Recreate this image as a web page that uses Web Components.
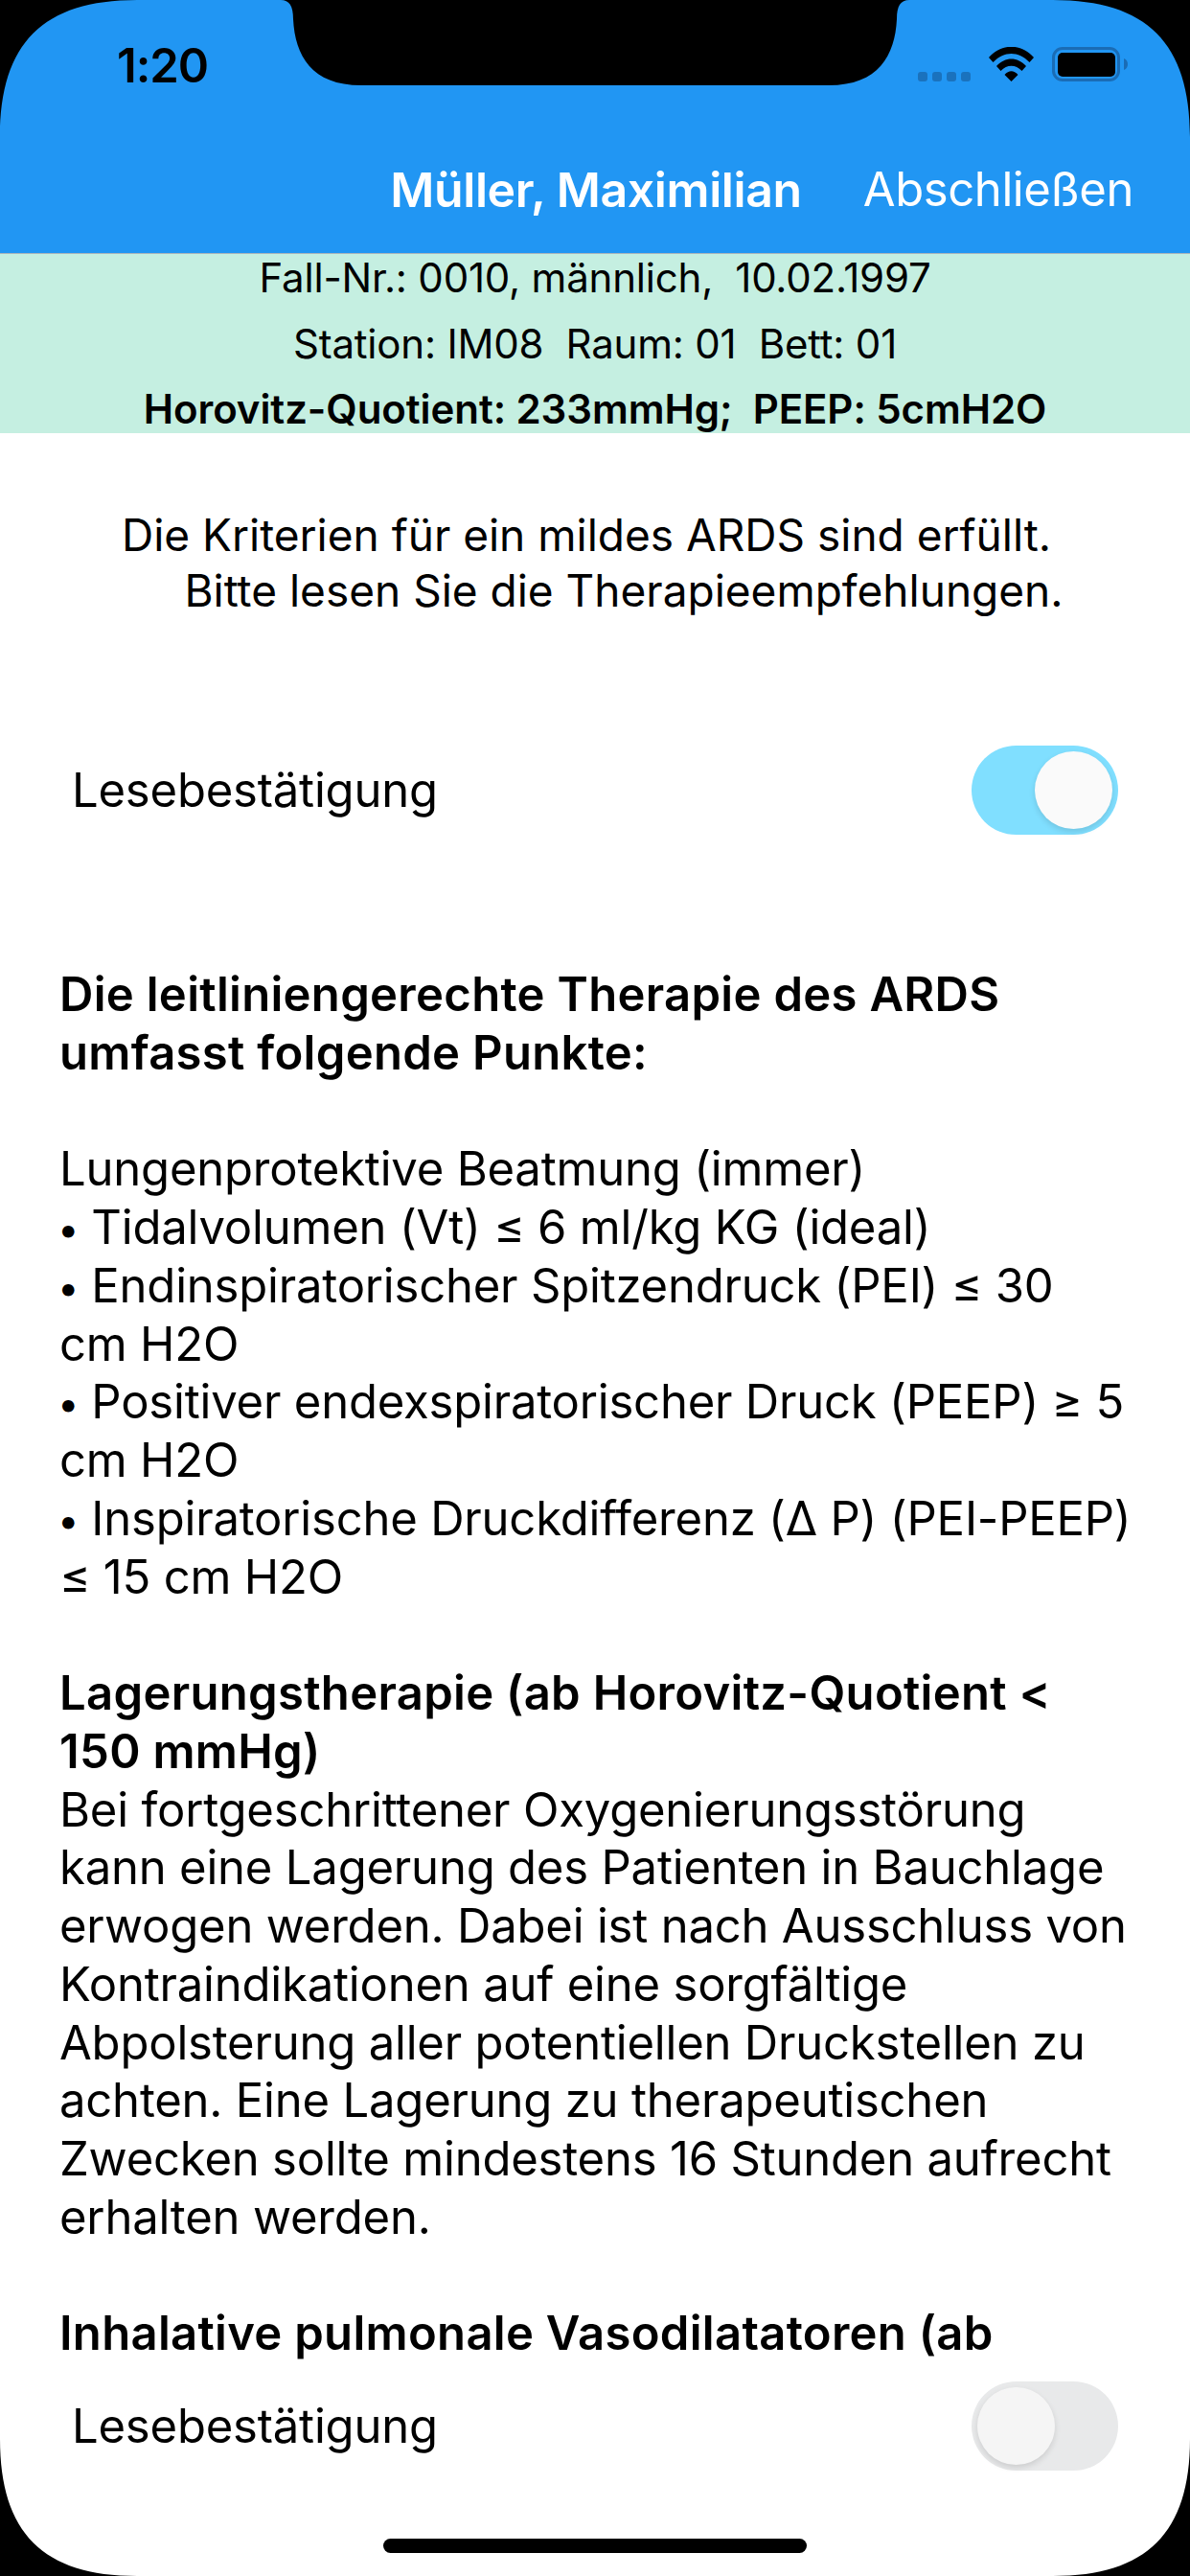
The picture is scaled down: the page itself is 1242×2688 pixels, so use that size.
<!DOCTYPE html>
<html lang="de"><head><meta charset="utf-8"><title>ARDS</title>
<style>
html,body{margin:0;padding:0;background:#000}
body{font-family:Inter,"Liberation Sans",sans-serif;color:#000;width:1242px;height:2688px;overflow:hidden}
</style></head><body>
<phone-screen>
  <app-header title-text="Müller, Maximilian" action="Abschließen"></app-header>
  <patient-banner>
    <span>Fall-Nr.: 0010, männlich,&nbsp; 10.02.1997</span>
    <span>Station: IM08&nbsp; Raum: 01&nbsp; Bett: 01</span>
    <b>Horovitz-Quotient: 233mmHg;&nbsp; PEEP: 5cmH2O</b>
  </patient-banner>
  <scroll-area>
    <notice-text>
      <span class="f">Die Kriterien für ein mildes ARDS sind erfüllt.</span>
      <span class="i">Bitte lesen Sie die Therapieempfehlungen.</span>
    </notice-text>
    <confirm-row checked></confirm-row>
    <therapy-text>
      <b>Die leitliniengerechte Therapie des ARDS</b>
      <b>umfasst folgende Punkte:</b>
      <span>&nbsp;</span>
      <span>Lungenprotektive Beatmung (immer)</span>
      <span><bullet-mark>• </bullet-mark>Tidalvolumen (Vt) ≤ 6 ml/kg KG (ideal)</span>
      <span><bullet-mark>• </bullet-mark>Endinspiratorischer Spitzendruck (PEI) ≤ 30</span>
      <span>cm H2O</span>
      <span><bullet-mark>• </bullet-mark>Positiver endexspiratorischer Druck (PEEP) ≥ 5</span>
      <span>cm H2O</span>
      <span><bullet-mark>• </bullet-mark>Inspiratorische Druckdifferenz (Δ P) (PEI-PEEP)</span>
      <span>≤ 15 cm H2O</span>
      <span>&nbsp;</span>
      <b>Lagerungstherapie (ab Horovitz-Quotient &lt;</b>
      <b>150 mmHg)</b>
      <span>Bei fortgeschrittener Oxygenierungsstörung</span>
      <span>kann eine Lagerung des Patienten in Bauchlage</span>
      <span>erwogen werden. Dabei ist nach Ausschluss von</span>
      <span>Kontraindikationen auf eine sorgfältige</span>
      <span>Abpolsterung aller potentiellen Druckstellen zu</span>
      <span>achten. Eine Lagerung zu therapeutischen</span>
      <span>Zwecken sollte mindestens 16 Stunden aufrecht</span>
      <span>erhalten werden.</span>
      <span>&nbsp;</span>
      <b>Inhalative pulmonale Vasodilatatoren (ab</b>
    </therapy-text>
  </scroll-area>
  <confirm-row class="bottom"></confirm-row>
</phone-screen>
<script>
function def(name, html, setup){
  customElements.define(name, class extends HTMLElement{
    constructor(){super();this.attachShadow({mode:'open'}).innerHTML=html;}
    connectedCallback(){ if(setup) setup(this); }
  });
}
def('phone-screen',`<style>
:host{display:flex;flex-direction:column;position:relative;width:1242px;height:2688px;background:#fff;overflow:hidden}
.mask{position:absolute;left:0;top:0;width:1242px;height:2688px;pointer-events:none}
.home{position:absolute;left:400px;top:2649px;width:442px;height:15px;border-radius:8px;background:#000}
</style><slot></slot>
<svg class="mask" viewBox="0 0 1242 2688" aria-hidden="true">
<path fill="#000" fill-rule="evenodd" d="M0 0H1242V2688H0Z M143 0C45 0 0 45 0 143V2545C0 2643 45 2688 143 2688H1099C1197 2688 1242 2643 1242 2545V143C1242 45 1197 0 1099 0H949C940 0 936 6 936 20C934 58 917 89 865 89H377C325 89 308 58 306 20C306 6 302 0 293 0Z"/>
</svg><div class="home"></div>`);
def('app-header',`<style>
:host{display:block;flex:none;background:#2196F3;height:264px;border-bottom:1px solid #a9b4bb;position:relative;box-sizing:content-box}
.status{height:166px;display:flex;justify-content:space-between;align-items:flex-start}
.time{font:600 49px/1 Inter,sans-serif;letter-spacing:-1px;color:#000;margin:44px 0 0 122px}
.icons{margin:49px 0 0 0;width:284px;height:36px}
.nav{display:flex;justify-content:flex-end;align-items:center;height:64px;color:#fff;white-space:nowrap}
.title{font:600 50px/64px Inter,sans-serif;letter-spacing:-.4px;margin-right:64px}
.action{font:400 49px/64px Inter,sans-serif;letter-spacing:-.4px;margin-right:59px}
</style>
<div class="status"><span class="time">1:20</span>
<svg class="icons" viewBox="958 49 284 36" aria-hidden="true">
<g fill="#1a72bd"><rect x="958" y="75" width="10" height="10" rx="3"/><rect x="973" y="75" width="10" height="10" rx="3"/><rect x="988" y="75" width="10" height="10" rx="3"/><rect x="1003" y="75" width="10" height="10" rx="3"/></g>
<path d="M1032 60C1045 45 1066 45 1079 60L1074.500 65C1063 53 1048 53 1036.500 65Z M1040 69C1049 59 1062 59 1071 69L1066.500 74C1060 67 1051 67 1044.500 74Z M1048.500 78C1053 73 1058 73 1062.500 78L1055.500 85Z" fill="#000"/>
<rect x="1099.500" y="50.500" width="68" height="33" rx="9.500" fill="none" stroke="#1a6cb5" stroke-width="3"/>
<rect x="1104" y="55" width="60" height="25" rx="5" fill="#000"/>
<path d="M1173 61C1176 62 1177 64.500 1177 67S1176 72 1173 73Z" fill="#1a6cb5"/>
</svg></div>
<div class="nav"><span class="title"></span><span class="action"></span></div>`,
el=>{const r=el.shadowRoot;r.querySelector('.title').textContent=el.getAttribute('title-text');r.querySelector('.action').textContent=el.getAttribute('action');});
def('patient-banner',`<style>
:host{display:flex;flex-direction:column;align-items:center;gap:18.500px;flex:none;height:187px;background:#C5EFE1;font:400 42px/50px Inter,sans-serif;letter-spacing:-.2px;white-space:nowrap}
::slotted(*){display:block;height:50px;flex:none}
::slotted(b){font-weight:600;letter-spacing:-.07px}
</style><slot></slot>`);
def('scroll-area',`<style>
:host{display:block;flex:1 1 0;min-height:0;overflow:hidden;background:#fff}
</style><slot></slot>`);
def('notice-text',`<style>
:host{display:flex;flex-direction:column;align-items:center;padding-top:77px;font:400 46px/58px Inter,sans-serif;white-space:nowrap}
::slotted(span){display:block}
::slotted(.f){margin-right:18px}
::slotted(.i){margin-left:60px}
</style><slot></slot>`);
def('confirm-row',`<style>
:host{display:flex;align-items:center;justify-content:space-between;height:93px;padding:0 75px;font:400 49px/60px Inter,sans-serif;letter-spacing:-.2px;flex:none;background:#fff}
:host([checked]){margin-top:133px}
:host(.bottom){margin-top:0;padding-bottom:110px;}
.track{width:153px;height:93px;border-radius:47px;background:#e8e9ea;position:relative}
:host([checked]) .track{background:#80DFFF}
.knob{position:absolute;top:6px;left:6px;width:81px;height:81px;border-radius:50%;background:#f5f5f5;box-shadow:0 3px 6px rgba(0,0,0,.12)}
:host([checked]) .knob{left:66px;background:#fafafa}
</style><span>Lesebestätigung</span><div class="track"><div class="knob"></div></div>`);
def('therapy-text',`<style>
:host{display:block;padding:0 0 0 62px;font:400 49px/60.750px Inter,sans-serif;letter-spacing:-.2px;white-space:nowrap;margin-top:137px}
::slotted(*){display:block;height:60.750px}
::slotted(b){font-weight:600;letter-spacing:.3px}
</style><slot></slot>`);
def('bullet-mark',`<style>
:host{display:inline;font-size:40px;vertical-align:1px;margin-left:-2px;word-spacing:2px}
</style><slot></slot>`);
</script>
</body></html>
